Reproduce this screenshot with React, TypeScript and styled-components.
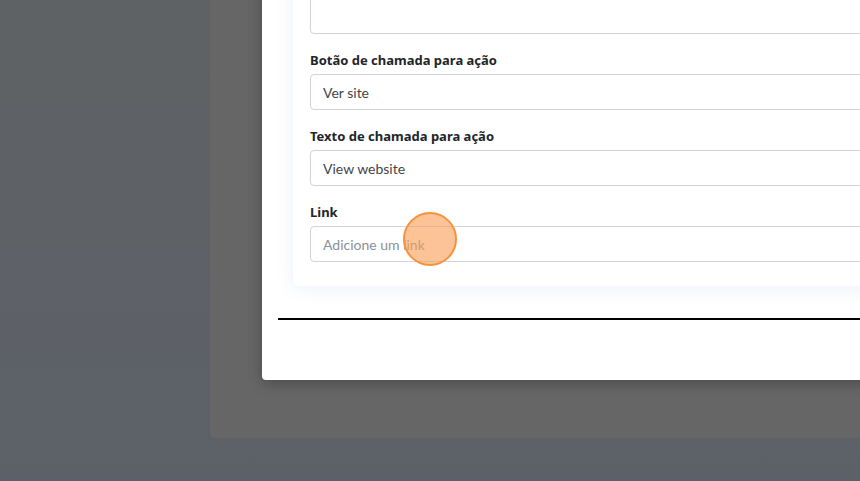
import React from "react";
import styled, { createGlobalStyle } from "styled-components";

const GlobalStyle = createGlobalStyle`
  html, body {
    margin: 0;
    padding: 0;
    width: 860px;
    height: 481px;
    overflow: hidden;
    background: #5d6168;
  }
  * { box-sizing: border-box; }
`;

const Page = styled.div`
  width: 860px;
  height: 481px;
  overflow: hidden;
  display: flex;
  align-items: flex-start;
  padding-left: 210px;
  background: linear-gradient(180deg, #5f6264 0%, #5c6068 100%);
  font-family: Lato, "Noto Sans", sans-serif;
`;

const Backdrop = styled.div`
  flex: 0 0 auto;
  width: 700px;
  height: 438px;
  background: #666666;
  border-bottom-left-radius: 4px;
  padding-left: 52px;
  display: flex;
  align-items: flex-start;
`;

const Modal = styled.div`
  flex: 0 0 auto;
  width: 700px;
  height: 420px;
  margin-top: -40px;
  background: #ffffff;
  border-radius: 4px;
  box-shadow: 0 3px 14px rgba(0, 0, 0, 0.28);
  display: flex;
  flex-direction: column;
  padding: 0 0 0 16px;
`;

const Card = styled.div`
  margin-left: 15px;
  background: #ffffff;
  border-radius: 6px;
  box-shadow: 0 2px 18px rgba(60, 110, 200, 0.1);
  padding: 0 16px 24px 17px;
  display: flex;
  flex-direction: column;
`;

const TextArea = styled.div`
  height: 74px;
  border: 1px solid #ced4da;
  border-radius: 4px;
  background: #fff;
`;

const Field = styled.div`
  margin-top: 16px;
  display: flex;
  flex-direction: column;
  gap: 4px;
`;

const Label = styled.label`
  font-family: "Noto Sans", Lato, sans-serif;
  font-size: 13px;
  line-height: 20px;
  font-weight: 700;
  color: #212529;
`;

const InputWrap = styled.div`
  position: relative;
`;

const Input = styled.input`
  width: 100%;
  height: 36px;
  border: 1px solid #ced4da;
  border-radius: 4px;
  padding: 0 12px;
  font-family: inherit;
  font-size: 14px;
  color: #3f454b;
  background: #fff;
  outline: none;
  &::placeholder {
    color: #8a9097;
  }
`;

const Cursor = styled.div`
  position: absolute;
  left: 93px;
  top: -14px;
  width: 54px;
  height: 54px;
  border-radius: 50%;
  background: rgba(250, 160, 85, 0.62);
  border: 2px solid #f5923e;
  pointer-events: none;
`;

const Divider = styled.div`
  margin-top: 32px;
  height: 2px;
  background: #000;
`;

export default function App() {
  return (
    <>
      <GlobalStyle />
      <Page>
        <Backdrop>
          <Modal>
            <Card>
              <TextArea />
              <Field>
                <Label>Botão de chamada para ação</Label>
                <Input defaultValue="Ver site" />
              </Field>
              <Field>
                <Label>Texto de chamada para ação</Label>
                <Input defaultValue="View website" />
              </Field>
              <Field>
                <Label>Link</Label>
                <InputWrap>
                  <Input placeholder="Adicione um link" />
                  <Cursor />
                </InputWrap>
              </Field>
            </Card>
            <Divider />
          </Modal>
        </Backdrop>
      </Page>
    </>
  );
}
